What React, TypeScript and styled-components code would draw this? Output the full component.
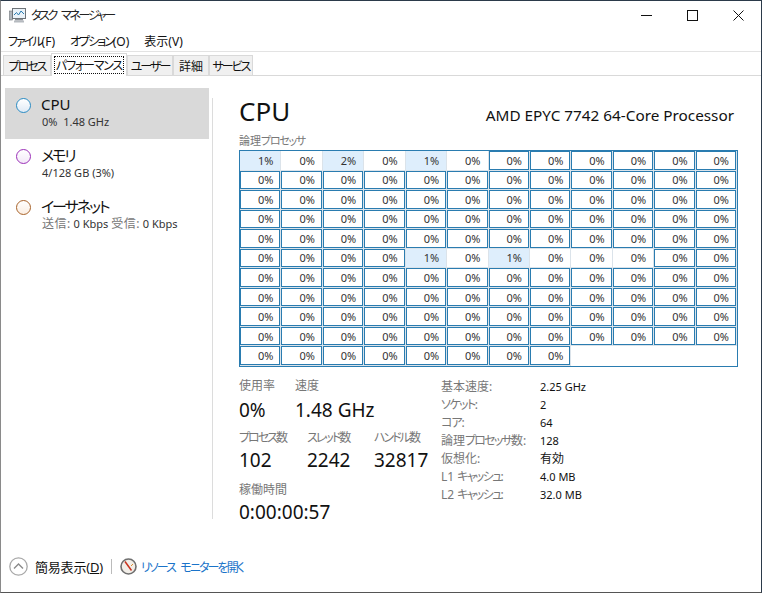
import React from "react";
import styled, { createGlobalStyle } from "styled-components";

const Global = createGlobalStyle`
  html, body { margin: 0; padding: 0; background: #fff; }
  body { font-family: "Noto Sans", "Noto Sans CJK JP", sans-serif; color: #111; overflow: hidden; font-feature-settings: "palt" 1; }
  * { box-sizing: border-box; }
`;

const Win = styled.div`
  width: 762px; height: 593px;
  border-top: 1px solid #2b3a4a; border-left: 1px solid #8a8a8a; border-right: 1px solid #2b3a4a; border-bottom: 1px solid #555;
  display: flex; flex-direction: column; background: #fff;
`;
const Kana = styled.span<{ $ls?: number }>`letter-spacing: ${p => p.$ls ?? -2}px;`;
const TitleBar = styled.div`
  height: 29px; flex: none; display: flex; align-items: center; padding-left: 8px;
  font-size: 12px; color: #222;
`;
const TitleText = styled.span`flex: 1; margin-left: 5px; margin-top: -2px; word-spacing: 4px;`;
const WinButton = styled.button`
  width: 46px; height: 29px; border: 0; background: transparent; padding: 0; flex: none;
  display: flex; align-items: center; justify-content: center;
`;
const MenuBar = styled.div`
  height: 21px; flex: none; display: flex; align-items: center; padding-left: 7px; gap: 15px;
  font-size: 12px; color: #111;
`;
const TabStrip = styled.div`
  height: 25px; flex: none; display: flex; align-items: flex-end; padding-left: 2px;
  border-top: 1px solid #e3e3e3; border-bottom: 1px solid #d9d9d9;
`;
const Tab = styled.div<{ $w: number; $active?: boolean }>`
  width: ${p => p.$w}px; height: ${p => (p.$active ? 23 : 20)}px;
  margin-bottom: ${p => (p.$active ? -1 : 0)}px;
  background: ${p => (p.$active ? "#fff" : "#f0f0f0")};
  border: 1px solid #d9d9d9; border-bottom: none;
  font-size: 12px; color: #111; white-space: nowrap; display: flex; align-items: center; justify-content: center;
  padding: ${p => (p.$active ? 2 : 0)}px;
`;
const FocusRing = styled.span`
  border: 1px dotted #111; width: 100%; height: 100%; display: flex; align-items: center; justify-content: center;
`;
const Body = styled.div`flex: 1; display: flex; min-height: 0;`;
const Side = styled.div`
  width: 211px; flex: none; margin-top: 12px; margin-bottom: 17px; display: flex; flex-direction: column; padding-left: 4px;
`;
const SideRule = styled.div`
  width: 1px; background: #dcdcdc; margin-top: 22px; margin-bottom: 22px; flex: none;
`;
const SideItem = styled.div<{ $sel?: boolean }>`
  width: 204px; height: 51px; display: flex; gap: 10px; padding: 8px 0 0 11px;
  background: ${p => (p.$sel ? "#d9d9d9" : "transparent")};
`;
const Dot = styled.span<{ $c: string; $f: string }>`
  width: 15px; height: 15px; border-radius: 50%; border: 1.5px solid ${p => p.$c}; background: ${p => p.$f}; flex: none; margin-top: 2px;
`;
const SideText = styled.div`display: flex; flex-direction: column;`;
const SideName = styled.div`font-size: 15px; line-height: 17px; color: #111;`;
const SideSub = styled.div`font-size: 11px; line-height: 17px; color: #333; white-space: pre; padding-left: 1px;`;
const SideSubGray = styled.span`color: #777; font-size: 12px; letter-spacing: 0.5px;`;
const Main = styled.div`flex: 1; padding: 17px 0 0 26px; display: flex; flex-direction: column; min-width: 0;`;
const Head = styled.div`
  display: flex; justify-content: space-between; align-items: flex-end; width: 495px; height: 36px;
`;
const Big = styled.div`font-size: 26px; line-height: 36px; color: #111;`;
const Model = styled.div`font-size: 15.3px; line-height: 22px; color: #111; padding-bottom: 3px;`;
const GridLabel = styled.div`font-size: 11px; line-height: 14px; color: #777; margin-top: 5px;`;
const Grid = styled.div`
  width: 499px; height: 217px; border: 1px solid #2a7cb0; background: #dbe3ea;
  display: grid; grid-template-columns: repeat(12, 1fr); grid-template-rows: repeat(11, 1fr); margin-top: 2px;
`;
const Cell = styled.div<{ $open: boolean; $hot: boolean }>`
  border: 1px solid ${p => (p.$open ? "transparent" : "#2a7cb0")};
  margin: 0 1px 1px 0;
  background: ${p => (p.$hot ? "#deeefc" : "#fff")};
  font-size: 11px; color: #333; display: flex; align-items: center; justify-content: flex-end;
  padding-right: 6px;
  line-height: 1;
`;
const Filler = styled.div`background: #fff; grid-column: span 4;`;
const Stats = styled.div`display: flex; margin-top: 11px;`;
const LeftStats = styled.div`width: 202px; flex: none; display: flex; flex-direction: column;`;
const StatRow = styled.div`display: flex; height: 52px;`;
const Stat = styled.div<{ $w: number }>`width: ${p => p.$w}px; flex: none;`;
const StatLabel = styled.div`font-size: 12px; line-height: 16px; color: #777;`;
const StatValue = styled.div<{ $top?: number }>`
  font-size: 19px; line-height: 27px; color: #111; margin-top: ${p => p.$top ?? 1}px; white-space: nowrap;
`;
const Specs = styled.div`display: grid; grid-template-columns: 99px auto; grid-auto-rows: 18px; align-content: start;`;
const SpecKey = styled.div`font-size: 12px; line-height: 18px; color: #777;`;
const SpecVal = styled.div<{ $cjk?: boolean }>`font-size: ${p => (p.$cjk ? 12 : 11)}px; line-height: 18px; color: #111;`;
const Footer = styled.div`
  height: 51px; flex: none; display: flex; align-items: center; padding: 0 0 0 8px;
`;
const FooterLabel = styled.span`font-size: 13px; color: #111; margin-left: 7px; letter-spacing: -0.2px;`;
const Under = styled.span`text-decoration: underline;`;
const FooterRule = styled.span`width: 1px; height: 15px; background: #bbb; margin: 0 8px 0 8px;`;
const LinkText = styled.span`font-size: 12px; color: #1a73c9; margin-left: 4px; letter-spacing: -1.9px; word-spacing: 4px;`;

const hot: Record<number, boolean> = { 0: true, 2: true, 4: true, 64: true, 66: true };
const val: Record<number, string> = { 0: "1%", 2: "2%", 4: "1%", 64: "1%", 66: "1%" };
const isOpen = (i: number) => i < 6 || (i >= 64 && i <= 69);

function AppIcon() {
  return (
    <svg width="17" height="15" viewBox="0 0 17 15">
      <rect x="0.5" y="3" width="3" height="9" fill="#aeb4ba" stroke="#6d7378" strokeWidth="0.6" />
      <rect x="3.5" y="0.5" width="13" height="10" fill="#eaf2f8" stroke="#6d7378" />
      <path d="M5 7 L7.5 4.5 L9.5 7 L12 3 L15 6" fill="none" stroke="#2a7cb0" />
      <rect x="6" y="11" width="8" height="1.5" fill="#8a9095" />
      <rect x="5" y="12.5" width="10" height="2" fill="#b5babf" />
    </svg>
  );
}

export default function App() {
  return (
    <>
      <Global />
      <Win>
        <TitleBar>
          <AppIcon />
          <TitleText><Kana $ls={-2.3}>タスク マネージャー</Kana></TitleText>
          <WinButton aria-label="min">
            <svg width="11" height="11"><path d="M0 5.5H11" stroke="#111" /></svg>
          </WinButton>
          <WinButton aria-label="max">
            <svg width="11" height="11"><rect x="0.5" y="0.5" width="10" height="10" fill="none" stroke="#111" /></svg>
          </WinButton>
          <WinButton aria-label="close">
            <svg width="11" height="11"><path d="M0.5 0.5L10.5 10.5M10.5 0.5L0.5 10.5" stroke="#111" /></svg>
          </WinButton>
        </TitleBar>
        <MenuBar>
          <span><Kana>ファイル</Kana>(F)</span>
          <span><Kana>オプション</Kana>(O)</span>
          <span>表示(V)</span>
        </MenuBar>
        <TabStrip>
          <Tab $w={48}><Kana>プロセス</Kana></Tab>
          <Tab $w={76} $active><FocusRing><Kana $ls={-1.2}>パフォーマンス</Kana></FocusRing></Tab>
          <Tab $w={46}><Kana>ユーザー</Kana></Tab>
          <Tab $w={36}>詳細</Tab>
          <Tab $w={44}><Kana>サービス</Kana></Tab>
        </TabStrip>
        <Body>
          <Side>
            <SideItem $sel>
              <Dot $c="#2a8cc4" $f="linear-gradient(#fff,#dfeaf5)" />
              <SideText>
                <SideName>CPU</SideName>
                <SideSub>0%  1.48 GHz</SideSub>
              </SideText>
            </SideItem>
            <SideItem>
              <Dot $c="#9b30b8" $f="linear-gradient(#fff,#f3e8f8)" />
              <SideText>
                <SideName><Kana>メモリ</Kana></SideName>
                <SideSub>4/128 GB (3%)</SideSub>
              </SideText>
            </SideItem>
            <SideItem>
              <Dot $c="#a8632a" $f="linear-gradient(#fff,#fbeee2)" />
              <SideText>
                <SideName><Kana>イーサネット</Kana></SideName>
                <SideSub><SideSubGray>送信:</SideSubGray> 0 Kbps <SideSubGray>受信:</SideSubGray> 0 Kbps</SideSub>
              </SideText>
            </SideItem>
          </Side>
          <SideRule />
          <Main>
            <Head>
              <Big>CPU</Big>
              <Model>AMD EPYC 7742 64-Core Processor</Model>
            </Head>
            <GridLabel>論理<Kana $ls={-1.3}>プロセッサ</Kana></GridLabel>
            <Grid>
              {Array.from({ length: 128 }, (_, i) => (
                <Cell key={i} $open={isOpen(i)} $hot={!!hot[i]}>{val[i] ?? "0%"}</Cell>
              ))}
              <Filler />
            </Grid>
            <Stats>
              <LeftStats>
                <StatRow>
                  <Stat $w={56}><StatLabel>使用率</StatLabel><StatValue $top={3}>0%</StatValue></Stat>
                  <Stat $w={120}><StatLabel>速度</StatLabel><StatValue $top={3}>1.48 GHz</StatValue></Stat>
                </StatRow>
                <StatRow>
                  <Stat $w={68}><StatLabel><Kana>プロセス</Kana>数</StatLabel><StatValue>102</StatValue></Stat>
                  <Stat $w={67}><StatLabel><Kana>スレッド</Kana>数</StatLabel><StatValue>2242</StatValue></Stat>
                  <Stat $w={60}><StatLabel><Kana>ハンドル</Kana>数</StatLabel><StatValue>32817</StatValue></Stat>
                </StatRow>
                <StatRow>
                  <Stat $w={120}><StatLabel>稼働時間</StatLabel><StatValue>0:00:00:57</StatValue></Stat>
                </StatRow>
              </LeftStats>
              <Specs>
                <SpecKey>基本速度:</SpecKey><SpecVal>2.25 GHz</SpecVal>
                <SpecKey><Kana $ls={-1.5}>ソケット</Kana>:</SpecKey><SpecVal>2</SpecVal>
                <SpecKey><Kana $ls={-1}>コア</Kana>:</SpecKey><SpecVal>64</SpecVal>
                <SpecKey>論理<Kana $ls={-1.8}>プロセッサ</Kana>数:</SpecKey><SpecVal>128</SpecVal>
                <SpecKey>仮想化:</SpecKey><SpecVal $cjk>有効</SpecVal>
                <SpecKey>L1 <Kana $ls={-1.7}>キャッシュ</Kana>:</SpecKey><SpecVal>4.0 MB</SpecVal>
                <SpecKey>L2 <Kana $ls={-1.7}>キャッシュ</Kana>:</SpecKey><SpecVal>32.0 MB</SpecVal>
              </Specs>
            </Stats>
          </Main>
        </Body>
        <Footer>
          <svg width="19" height="19" viewBox="0 0 19 19">
            <circle cx="9.5" cy="9.5" r="8.7" fill="#fff" stroke="#a8a8a8" strokeWidth="1.3" />
            <path d="M5 11.5 L9.5 7 L14 11.5" fill="none" stroke="#8a8a8a" strokeWidth="1.4" />
          </svg>
          <FooterLabel>簡易表示(<Under>D</Under>)</FooterLabel>
          <FooterRule />
          <svg width="17" height="17" viewBox="0 0 17 17">
            <circle cx="8.5" cy="8.5" r="7.5" fill="#f2eee8" stroke="#6f6f6f" strokeWidth="1.6" />
            <path d="M5 3.5 L11.5 12.5" stroke="#c8321e" strokeWidth="1.5" />
            <path d="M13 6 L11 8" stroke="#e09030" strokeWidth="1" />
          </svg>
          <LinkText>リソース モニターを開く</LinkText>
        </Footer>
      </Win>
    </>
  );
}
